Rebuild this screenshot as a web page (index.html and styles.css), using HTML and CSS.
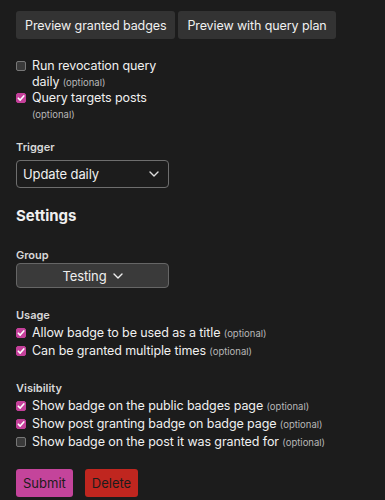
FILE: index.html
```html
<!DOCTYPE html>
<html>
<head>
<meta charset="utf-8">
<link rel="stylesheet" href="styles.css">
</head>
<body>
<div class="page">
  <div class="actions">
    <button class="btn">Preview granted badges</button>
    <button class="btn">Preview with query plan</button>
  </div>

  <div class="narrow">
    <label class="check">
      <span class="box"></span>
      <span class="txt">Run revocation query daily <span class="opt">(optional)</span></span>
    </label>
    <label class="check">
      <span class="box on"><svg viewBox="0 0 10 10" width="10" height="10"><path d="M2.3 5.2 L4.2 7.1 L7.8 2.9" fill="none" stroke="#fff" stroke-width="1.6" stroke-linecap="round" stroke-linejoin="round"/></svg></span>
      <span class="txt">Query targets posts <span class="opt">(optional)</span></span>
    </label>
  </div>

  <div class="field-label trigger-label">Trigger</div>
  <div class="select">
    <span>Update daily</span>
    <svg class="chev" viewBox="0 0 10 6" width="10" height="6"><path d="M1 1 L5 5 L9 1" fill="none" stroke="#ddd" stroke-width="1.4" stroke-linecap="round" stroke-linejoin="round"/></svg>
  </div>

  <h2 class="section">Settings</h2>

  <div class="field-label group-label">Group</div>
  <div class="group-btn">
    <span>Testing</span>
    <svg viewBox="0 0 10 6" width="10" height="6"><path d="M1 1 L5 5 L9 1" fill="none" stroke="#eee" stroke-width="1.4" stroke-linecap="round" stroke-linejoin="round"/></svg>
  </div>

  <div class="field-label usage-label">Usage</div>
  <div class="rows">
    <label class="check row">
      <span class="box on"><svg viewBox="0 0 10 10" width="10" height="10"><path d="M2.3 5.2 L4.2 7.1 L7.8 2.9" fill="none" stroke="#fff" stroke-width="1.6" stroke-linecap="round" stroke-linejoin="round"/></svg></span>
      <span class="txt">Allow badge to be used as a title <span class="opt">(optional)</span></span>
    </label>
    <label class="check row">
      <span class="box on"><svg viewBox="0 0 10 10" width="10" height="10"><path d="M2.3 5.2 L4.2 7.1 L7.8 2.9" fill="none" stroke="#fff" stroke-width="1.6" stroke-linecap="round" stroke-linejoin="round"/></svg></span>
      <span class="txt">Can be granted multiple times <span class="opt">(optional)</span></span>
    </label>
  </div>

  <div class="field-label vis-label">Visibility</div>
  <div class="rows">
    <label class="check row">
      <span class="box on"><svg viewBox="0 0 10 10" width="10" height="10"><path d="M2.3 5.2 L4.2 7.1 L7.8 2.9" fill="none" stroke="#fff" stroke-width="1.6" stroke-linecap="round" stroke-linejoin="round"/></svg></span>
      <span class="txt">Show badge on the public badges page <span class="opt">(optional)</span></span>
    </label>
    <label class="check row">
      <span class="box on"><svg viewBox="0 0 10 10" width="10" height="10"><path d="M2.3 5.2 L4.2 7.1 L7.8 2.9" fill="none" stroke="#fff" stroke-width="1.6" stroke-linecap="round" stroke-linejoin="round"/></svg></span>
      <span class="txt">Show post granting badge on badge page <span class="opt">(optional)</span></span>
    </label>
    <label class="check row">
      <span class="box"></span>
      <span class="txt">Show badge on the post it was granted for <span class="opt">(optional)</span></span>
    </label>
  </div>

  <div class="footer">
    <button class="submit">Submit</button>
    <button class="delete">Delete</button>
  </div>
</div>
</body>
</html>
```

FILE: styles.css
```css
html, body {
  margin: 0;
  padding: 0;
  background: #1c1c1c;
  height: 100%;
  overflow: hidden;
}
body {
  font-family: Inter, "Noto Sans", sans-serif;
  color: #f0f0f0;
  font-size: 12.5px;
  letter-spacing: -0.1px;
}
.page {
  padding: 11px 16px 0 16px;
}
.actions {
  display: flex;
  gap: 3px;
}
.btn {
  font-family: inherit;
  font-size: 12.5px;
  letter-spacing: -0.1px;
  color: #f0f0f0;
  background: #333;
  border: none;
  border-radius: 3px;
  height: 28px;
  padding: 0 9px;
}
.narrow {
  width: 160px;
  margin-top: 19px;
}
.check {
  display: flex;
  align-items: flex-start;
  gap: 6px;
  line-height: 16px;
}
.check .box {
  flex: none;
  width: 10px;
  height: 10px;
  margin-top: 3px;
  box-sizing: border-box;
  border: 1px solid #777;
  border-radius: 2px;
  background: #3a3a3a;
  display: flex;
}
.check .box.on {
  background: #c4409a;
  border-color: #c4409a;
}
.check .box.on svg {
  margin: -1px;
}
.opt {
  font-size: 9.5px;
  line-height: 10px;
  letter-spacing: 0;
  color: #b8b8b8;
}
.field-label {
  font-size: 11px;
  font-weight: 600;
  line-height: 14px;
  letter-spacing: 0;
  color: #d8d8d8;
}
.trigger-label { margin-top: 18px; }
.select {
  margin-top: 6px;
  width: 153px;
  height: 28px;
  box-sizing: border-box;
  border: 1px solid #6e6e6e;
  border-radius: 4px;
  display: flex;
  align-items: center;
  justify-content: space-between;
  padding: 0 9px 0 6px;
  font-size: 13px;
}
.section {
  margin: 18px 0 0;
  font-size: 15px;
  font-weight: 700;
  line-height: 20px;
  letter-spacing: 0;
}
.group-label { margin-top: 22px; }
.group-btn {
  margin-top: 1px;
  width: 153px;
  height: 25px;
  box-sizing: border-box;
  background: #3a3a3a;
  border: 1px solid #666;
  border-radius: 4px;
  display: flex;
  align-items: center;
  justify-content: center;
  gap: 6px;
  font-size: 13px;
  color: #eee;
}
.usage-label { margin-top: 20px; }
.rows { margin-top: 2px; }
.check.row {
  line-height: 18px;
}
.check.row .box {
  margin-top: 4px;
}
.vis-label { margin-top: 21px; }
.footer {
  margin-top: 18px;
  display: flex;
  gap: 12px;
}
.footer button {
  font-family: inherit;
  font-size: 13px;
  color: #1c1c1c;
  border: none;
  border-radius: 3px;
  height: 28px;
  padding: 0 7px;
}
.submit { background: #c4449b; }
.delete { background: #c0261f; }
```
